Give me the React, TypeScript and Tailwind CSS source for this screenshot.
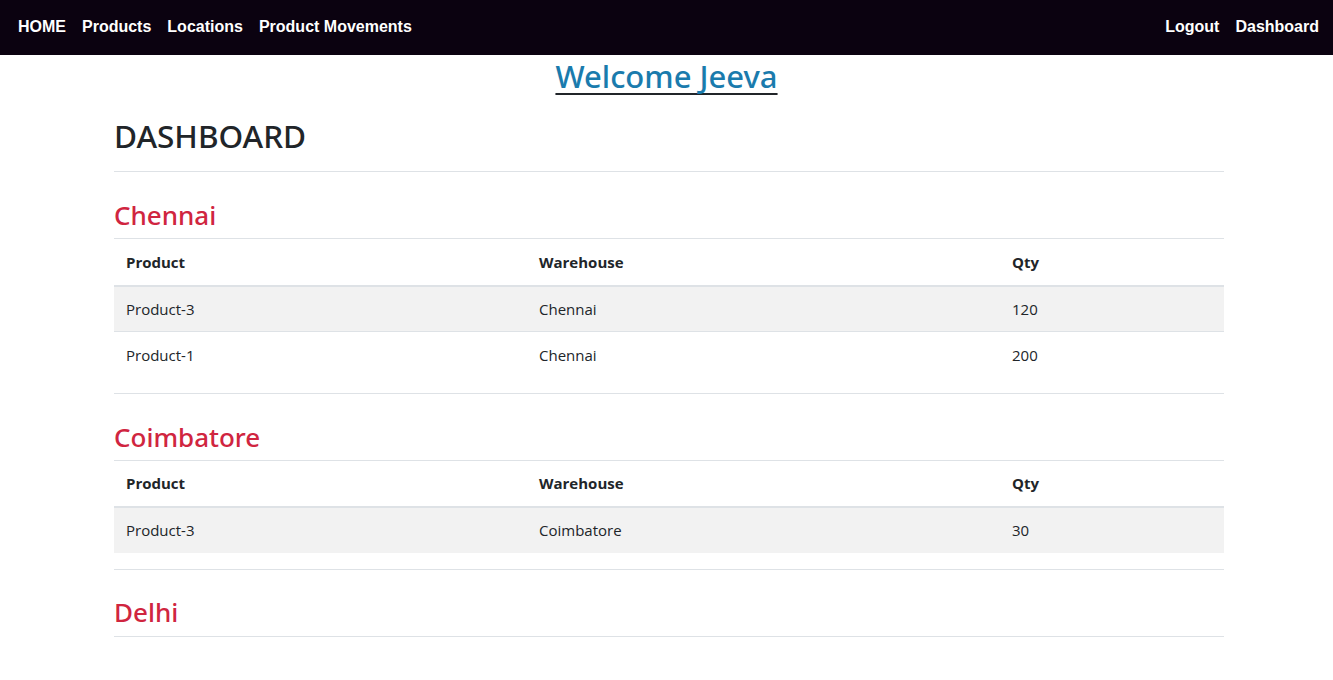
import React from "react";

const font = { fontFamily: '"Open Sans", "Noto Sans", sans-serif' };
const headFont = { fontFamily: '"Noto Sans", "Open Sans", sans-serif' };

type Row = { product: string; warehouse: string; qty: string };

const sections: { name: string; rows: Row[] }[] = [
  {
    name: "Chennai",
    rows: [
      { product: "Product-3", warehouse: "Chennai", qty: "120" },
      { product: "Product-1", warehouse: "Chennai", qty: "200" },
    ],
  },
  {
    name: "Coimbatore",
    rows: [{ product: "Product-3", warehouse: "Coimbatore", qty: "30" }],
  },
];

function Table({ rows }: { rows: Row[] }) {
  return (
    <table className="w-full border-collapse text-[15px] text-[#212529]">
      <thead>
        <tr className="border-t border-[#dee2e6] border-b-2 border-b-[#dee2e6]">
          <th className="w-[413px] h-[47px] px-3 text-left font-bold">Product</th>
          <th className="w-[473px] h-[47px] px-3 text-left font-bold">Warehouse</th>
          <th className="h-[47px] px-3 text-left font-bold">Qty</th>
        </tr>
      </thead>
      <tbody>
        {rows.map((r, i) => (
          <tr
            key={i}
            className={`${i % 2 === 0 ? "bg-[#f2f2f2]" : "bg-white"} ${i > 0 ? "border-t border-[#dee2e6]" : ""}`}
          >
            <td className="h-[46px] px-3">{r.product}</td>
            <td className="h-[46px] px-3">{r.warehouse}</td>
            <td className="h-[46px] px-3">{r.qty}</td>
          </tr>
        ))}
      </tbody>
    </table>
  );
}

export default function App() {
  return (
    <div className="min-h-[680px] bg-white" style={font}>
      <nav
        className="flex h-[55px] items-center justify-between bg-[#0b0210] px-[18px] pb-[2px] text-[16px] font-bold text-white"
        style={{ fontFamily: '"Liberation Sans", Arial, sans-serif' }}
      >
        <div className="flex gap-4">
          <span>HOME</span>
          <span>Products</span>
          <span>Locations</span>
          <span>Product Movements</span>
        </div>
        <div className="flex gap-4 mr-[-4px]">
          <span>Logout</span>
          <span>Dashboard</span>
        </div>
      </nav>
      <div className="flex justify-center">
        <a
          className="text-[31px] font-medium leading-[42px] text-[#1a7bad] underline decoration-[#212529] decoration-2 underline-offset-[5px] [text-decoration-skip-ink:none]"
          style={headFont}
        >
          Welcome Jeeva
        </a>
      </div>
      <div className="ml-[114px] w-[1110px] text-[#212529]">
        <h2 className="mt-[19px] text-[31.5px] font-medium leading-[40px]" style={headFont}>
          DASHBOARD
        </h2>
        <div className="mt-[15px] border-t border-[#dee2e6]" />
        {sections.map((s, idx) => (
          <div key={s.name}>
            <h3
              className="mt-[25px] mb-[5px] text-[26px] font-medium leading-[36px] text-[#d0253f]"
              style={headFont}
            >
              {s.name}
            </h3>
            <Table rows={s.rows} />
            <div className={`${idx === 0 ? "mt-[15px]" : "mt-[16px]"} border-t border-[#dee2e6]`} />
          </div>
        ))}
        <h3
          className="mt-[24px] mb-[6px] text-[26px] font-medium leading-[36px] text-[#d0253f]"
          style={headFont}
        >
          Delhi
        </h3>
        <div className="border-t border-[#dee2e6]" />
      </div>
    </div>
  );
}
